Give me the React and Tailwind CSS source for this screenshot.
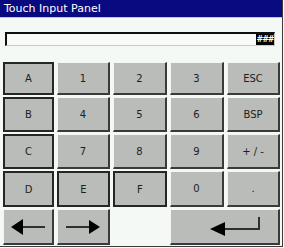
import React from "react";

const face = "bg-[#b9bcb8] text-[#1e1e1e]";
const raised =
  "border-t border-l border-t-[#f4f6f4] border-l-[#f4f6f4] border-r-2 border-b-2 border-r-[#3a3a3a] border-b-[#3a3a3a]";
const framed = "border-2 border-[#262626]";

const Key = ({ label, dark, className = "", children }) => (
  <div
    className={`flex items-center justify-center text-[10px] ${face} ${
      dark ? framed : raised
    } ${className}`}
  >
    {children || label}
  </div>
);

const LeftArrow = () => (
  <svg width="34" height="16" viewBox="0 0 34 16">
    <polygon points="0,8 12,0 12,16" fill="#000" />
    <rect x="12" y="7" width="22" height="2" fill="#303030" />
  </svg>
);

const RightArrow = () => (
  <svg width="34" height="16" viewBox="0 0 34 16">
    <rect x="0" y="7" width="24" height="2" fill="#303030" />
    <polygon points="34,8 23,1 23,15" fill="#000" />
  </svg>
);

const EnterArrow = () => (
  <svg width="50" height="19" viewBox="0 0 50 19">
    <polygon points="0,12 15,5 15,19" fill="#000" />
    <rect x="15" y="11" width="35" height="2" fill="#303030" />
    <rect x="48" y="0" width="2" height="13" fill="#303030" />
  </svg>
);

const App = () => {
  return (
    <div
      className="w-[284px] h-[248px] bg-[#f5f9f5] overflow-hidden"
      style={{ fontFamily: '"DejaVu Sans", "Liberation Sans", sans-serif' }}
    >
      <div className="w-[283px] h-[247px] border-r border-b border-[#3c3c3c] flex flex-col">
        <div className="h-[18px] bg-[#0a0a80] border-b border-[#c4c8c4] text-white text-[11px] leading-[17px] px-[4px]">
          Touch Input Panel
        </div>

        <div className="mt-[14px] ml-[5px] w-[270px] h-[14px] flex border-t-2 border-l-2 border-[#101010] border-b border-b-[#c8ccc8] border-r border-r-[#c8ccc8] bg-[#f8fbf8]">
          <div className="flex-1" />
          <div className="w-[18px] bg-black text-white text-[8px] font-bold leading-[12px] flex justify-center whitespace-nowrap tracking-[-1px]">
            ###
          </div>
        </div>

        <div className="mt-[16px] ml-[3px] grid grid-cols-[51px_53px_54px_54px_53px] grid-rows-[33px_35px_35px_36px_36px] gap-x-[3px] gap-y-[2px]">
          <Key label="A" dark />
          <Key label="1" />
          <Key label="2" />
          <Key label="3" />
          <Key label="ESC" />

          <Key label="B" dark />
          <Key label="4" />
          <Key label="5" />
          <Key label="6" />
          <Key label="BSP" />

          <Key label="C" dark />
          <Key label="7" />
          <Key label="8" />
          <Key label="9" />
          <Key label="+ / -" />

          <Key label="D" dark />
          <Key label="E" dark />
          <Key label="F" dark />
          <Key label="0" />
          <Key label="." />

          <Key>
            <LeftArrow />
          </Key>
          <Key>
            <RightArrow />
          </Key>
          <div />
          <Key className="col-span-2 pl-[20px]">
            <EnterArrow />
          </Key>
        </div>
      </div>
    </div>
  );
};

export default App;
